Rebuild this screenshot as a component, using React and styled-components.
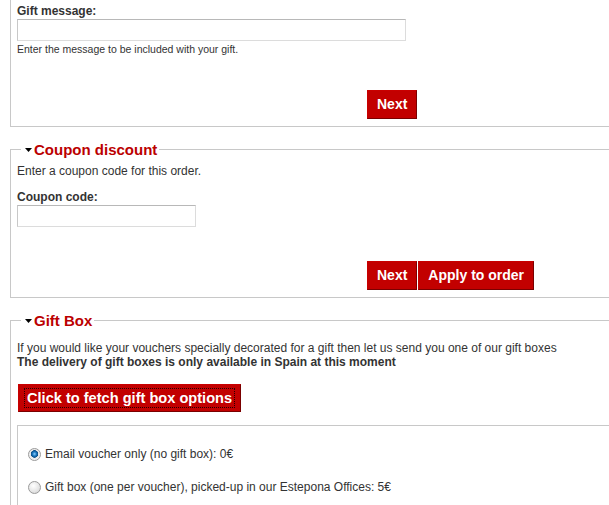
import React from "react";
import styled, { createGlobalStyle } from "styled-components";

const GlobalStyle = createGlobalStyle`
  html, body {
    margin: 0;
    padding: 0;
    overflow: hidden;
    background: #fff;
  }
  body {
    font-family: "Liberation Sans", Arial, sans-serif;
    font-size: 12px;
    color: #333;
  }
`;

const Page = styled.div`
  display: flex;
  flex-direction: column;
  gap: 14px;
  padding-left: 10px;
`;

const Fieldset = styled.fieldset`
  box-sizing: border-box;
  width: 660px;
  margin: ${(p) => (p.$cut ? "-10px 0 0" : "0")};
  padding: ${(p) => (p.$cut ? "13px" : "0")} 6px 7px;
  border: 1px solid #c8c8c8;
  min-inline-size: 0;
`;

const Legend = styled.legend`
  margin-left: 4px;
  padding: 0 2px;
  display: flex;
  align-items: center;
  color: #bb0000;
  font-weight: bold;
  font-size: 15px;
  line-height: 17px;
`;

const Arrow = styled.svg`
  width: 7px;
  height: 4px;
  margin: 1px 2px 0 2px;
`;

const Label = styled.div`
  font-weight: bold;
  font-size: 12px;
  line-height: 14px;
  margin-top: ${(p) => p.$mt || 0}px;
`;

const Text = styled.p`
  margin: ${(p) => p.$mt || 0}px 0 0;
  font-size: 12px;
  line-height: 14px;
  font-weight: ${(p) => (p.$bold ? "bold" : "normal")};
`;

const Help = styled.div`
  font-size: 10.5px;
  line-height: 13px;
  margin-top: 2px;
`;

const Input = styled.input`
  display: block;
  box-sizing: border-box;
  width: ${(p) => p.$w}px;
  height: 22px;
  margin: 1px 0 0;
  border: 1px solid;
  border-color: #b8b8b8 #dcdcdc #dcdcdc #c8c8c8;
  background: #fff;
  padding: 2px 4px;
  font: inherit;
`;

const ButtonRow = styled.div`
  display: flex;
  gap: 1px;
  margin: ${(p) => p.$mt}px 0 0 350px;
`;

const Button = styled.button`
  box-sizing: border-box;
  height: 29px;
  padding: 0 9px;
  border: 1px solid;
  border-color: #c80000 #7a0000 #7a0000 #c80000;
  background: #c20000;
  color: #fff;
  font-family: "Liberation Sans", Arial, sans-serif;
  font-weight: bold;
  font-size: 14px;
  line-height: 15px;
  cursor: pointer;
`;

const FetchButton = styled(Button)`
  height: 28px;
  padding: 3px 5px;
  margin: 15px 0 0 1px;
  align-self: flex-start;
  font-size: 14.6px;
`;

const FocusRing = styled.span`
  display: block;
  padding: 0 2px;
  border: 1px dotted #2a0000;
  line-height: 18px;
`;

const Options = styled.div`
  margin-top: 13px;
  border: 1px solid #c8c8c8;
  border-right: none;
  padding: 21px 0 20px 10px;
  display: flex;
  flex-direction: column;
  gap: 19px;
`;

const Option = styled.label`
  display: flex;
  align-items: center;
  gap: 4px;
  font-size: 12px;
  line-height: 14px;
`;

const Radio = styled.span`
  box-sizing: border-box;
  width: 13px;
  height: 13px;
  border-radius: 50%;
  border: 1px solid #9a9a9a;
  background: ${(p) =>
    p.$checked
      ? "radial-gradient(circle at 50% 45%, #8fd0ff 0, #1b78c0 2px, #0b4d86 3.5px, #e8e8e8 4px, #fff 100%)"
      : "radial-gradient(circle at 40% 35%, #fff 0, #e4e4e4 60%, #cfcfcf 100%)"};
`;

const Column = styled.div`
  display: flex;
  flex-direction: column;
`;

function SectionLegend({ children }) {
  return (
    <Legend>
      <Arrow viewBox="0 0 7 4">
        <path d="M0 0 L7 0 L3.5 4 Z" fill="#000" />
      </Arrow>
      {children}
    </Legend>
  );
}

export default function App() {
  return (
    <>
      <GlobalStyle />
      <Page>
        <Fieldset $cut>
          <Label>Gift message:</Label>
          <Input $w={389} type="text" />
          <Help>Enter the message to be included with your gift.</Help>
          <ButtonRow $mt={34}>
            <Button>Next</Button>
          </ButtonRow>
        </Fieldset>

        <Fieldset>
          <SectionLegend>Coupon discount</SectionLegend>
          <Text $mt={6}>Enter a coupon code for this order.</Text>
          <Label $mt={12}>Coupon code:</Label>
          <Input $w={179} type="text" />
          <ButtonRow $mt={34}>
            <Button>Next</Button>
            <Button>Apply to order</Button>
          </ButtonRow>
        </Fieldset>

        <Fieldset>
          <SectionLegend>Gift Box</SectionLegend>
          <Column>
            <Text $mt={12}>
              If you would like your vouchers specially decorated for a gift then let us send you one of our gift boxes
            </Text>
            <Text $bold>The delivery of gift boxes is only available in Spain at this moment</Text>
            <FetchButton>
              <FocusRing>Click to fetch gift box options</FocusRing>
            </FetchButton>
            <Options>
              <Option>
                <Radio $checked />
                Email voucher only (no gift box): 0€
              </Option>
              <Option>
                <Radio />
                Gift box (one per voucher), picked-up in our Estepona Offices: 5€
              </Option>
            </Options>
          </Column>
        </Fieldset>
      </Page>
    </>
  );
}
